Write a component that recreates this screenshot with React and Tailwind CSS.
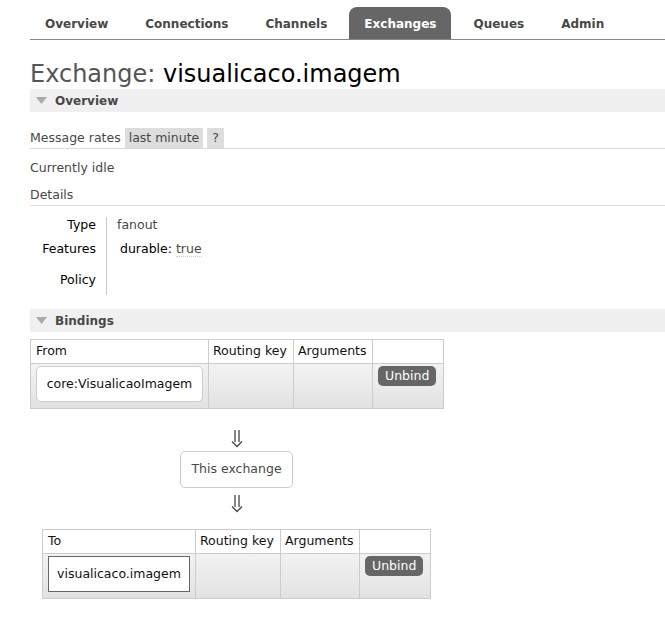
import React from "react";

const font = { fontFamily: '"DejaVu Sans", Verdana, sans-serif' };

function Tab({ label, active }) {
  return (
    <div
      className={
        "h-[32px] px-[15px] flex items-center rounded-t-[8px] text-[12px] font-bold pt-[1px] " +
        (active ? "bg-[#666666] text-white" : "text-[#484848]")
      }
    >
      {label}
    </div>
  );
}

function SectionHeader({ label }) {
  return (
    <div className="h-[23px] bg-[#f0f0f0] flex items-center pl-[6px] text-[12px] font-bold text-[#484848]">
      <svg width="11" height="8" viewBox="0 0 11 8" className="mr-[8px]">
        <polygon points="0,0 11,0 5.5,7" fill="#aaaaaa" />
      </svg>
      {label}
    </div>
  );
}

function Unbind() {
  return (
    <div className="inline-flex items-center justify-center h-[20px] px-[7px] rounded-[5px] bg-[#666666] text-white text-[12.5px] leading-none">
      Unbind
    </div>
  );
}

function Arrow() {
  return (
    <svg width="12" height="18" viewBox="0 0 12 18">
      <path d="M4 0 V12 M8 0 V12" stroke="#444444" strokeWidth="1.3" fill="none" />
      <path d="M1 11.5 L6 16.5 L11 11.5" stroke="#444444" strokeWidth="1.3" fill="none" />
    </svg>
  );
}

function BindTable({ first, name, rounded, widths }) {
  const [w1, w2, w3, w4] = widths;
  return (
    <table className="border-collapse text-[12.5px] text-[#111]">
      <thead>
        <tr className="h-[24px] bg-white">
          <th style={{ width: w1 }} className="border border-[#cccccc] text-left font-normal px-[5px]">{first}</th>
          <th style={{ width: w2 }} className="border border-[#cccccc] text-left font-normal px-[4px]">Routing key</th>
          <th style={{ width: w3 }} className="border border-[#cccccc] text-left font-normal px-[4px]">Arguments</th>
          <th style={{ width: w4 }} className="border border-[#cccccc]"></th>
        </tr>
      </thead>
      <tbody>
        <tr className="h-[45px] bg-gradient-to-b from-[#f2f2f2] to-[#e2e2e2]">
          <td className="border border-[#cccccc] px-[5px] py-[2px] align-top">
            <div
              className={
                "h-[36px] bg-white flex items-center justify-center " +
                (rounded ? "border border-[#cccccc] rounded-[5px]" : "border border-[#666666]")
              }
            >
              {name}
            </div>
          </td>
          <td className="border border-[#cccccc]"></td>
          <td className="border border-[#cccccc]"></td>
          <td className="border border-[#cccccc] align-top pt-[2px] px-[5px]">
            <Unbind />
          </td>
        </tr>
      </tbody>
    </table>
  );
}

export default function App() {
  return (
    <div style={font} className="w-[665px] h-[619px] bg-white overflow-hidden text-[#484848]">
      <div className="pl-[30px] pt-[7px]">
        <div className="flex gap-[7px] border-b border-[#888888] h-[33px] items-end">
          <Tab label="Overview" />
          <Tab label="Connections" />
          <Tab label="Channels" />
          <Tab label="Exchanges" active />
          <Tab label="Queues" />
          <Tab label="Admin" />
        </div>

        <h1 className="mt-[19px] text-[24px] leading-[30px] font-normal text-[#555555]">
          Exchange: <span className="text-black">visualicaco.imagem</span>
        </h1>

        <SectionHeader label="Overview" />

        <div className="mt-[16px] flex items-center text-[12.5px] h-[21px] border-b border-[#dddddd]">
          <span className="mr-[4px]">Message rates</span>
          <span className="bg-[#dddddd] px-[4px] h-[20px] flex items-center">last minute</span>
          <span className="bg-[#dddddd] px-[5px] h-[20px] flex items-center ml-[4px]">?</span>
        </div>

        <div className="mt-[11px] text-[12.5px] leading-[16px]">Currently idle</div>

        <div className="mt-[11px] text-[12.5px] leading-[16px] pb-[2px] border-b border-[#dddddd]">Details</div>

        <div className="mt-[11px] flex text-[12.5px] leading-[16px]">
          <div className="w-[66px] text-right text-black flex flex-col">
            <div className="h-[24px]">Type</div>
            <div className="h-[31px]">Features</div>
            <div className="h-[23px]">Policy</div>
          </div>
          <div className="ml-[10px] border-l border-[#cccccc] pl-[10px] flex flex-col w-[300px]">
            <div className="h-[24px]">fanout</div>
            <div className="h-[31px] pl-[3px]">
              <span className="text-black">durable:</span>{" "}
              <span className="border-b border-dotted border-[#cccccc]">true</span>
            </div>
            <div className="h-[23px]"></div>
          </div>
        </div>

        <div className="mt-[14px]">
          <SectionHeader label="Bindings" />
        </div>

        <div className="mt-[7px]">
          <BindTable first="From" name="core:VisualicaoImagem" rounded widths={[178, 85, 79, 71]} />
        </div>

        <div className="w-[413px] flex flex-col items-center">
          <div className="mt-[20px] h-[20px] flex items-center">
            <Arrow />
          </div>
          <div className="mt-[2px] h-[37px] px-[10px] flex items-center border border-[#cccccc] rounded-[5px] text-[12.5px]">
            This exchange
          </div>
          <div className="mt-[6px] h-[20px] flex items-center">
            <Arrow />
          </div>
        </div>

        <div className="mt-[15px] ml-[12px]">
          <BindTable first="To" name="visualicaco.imagem" widths={[153, 85, 79, 71]} />
        </div>
      </div>
    </div>
  );
}
